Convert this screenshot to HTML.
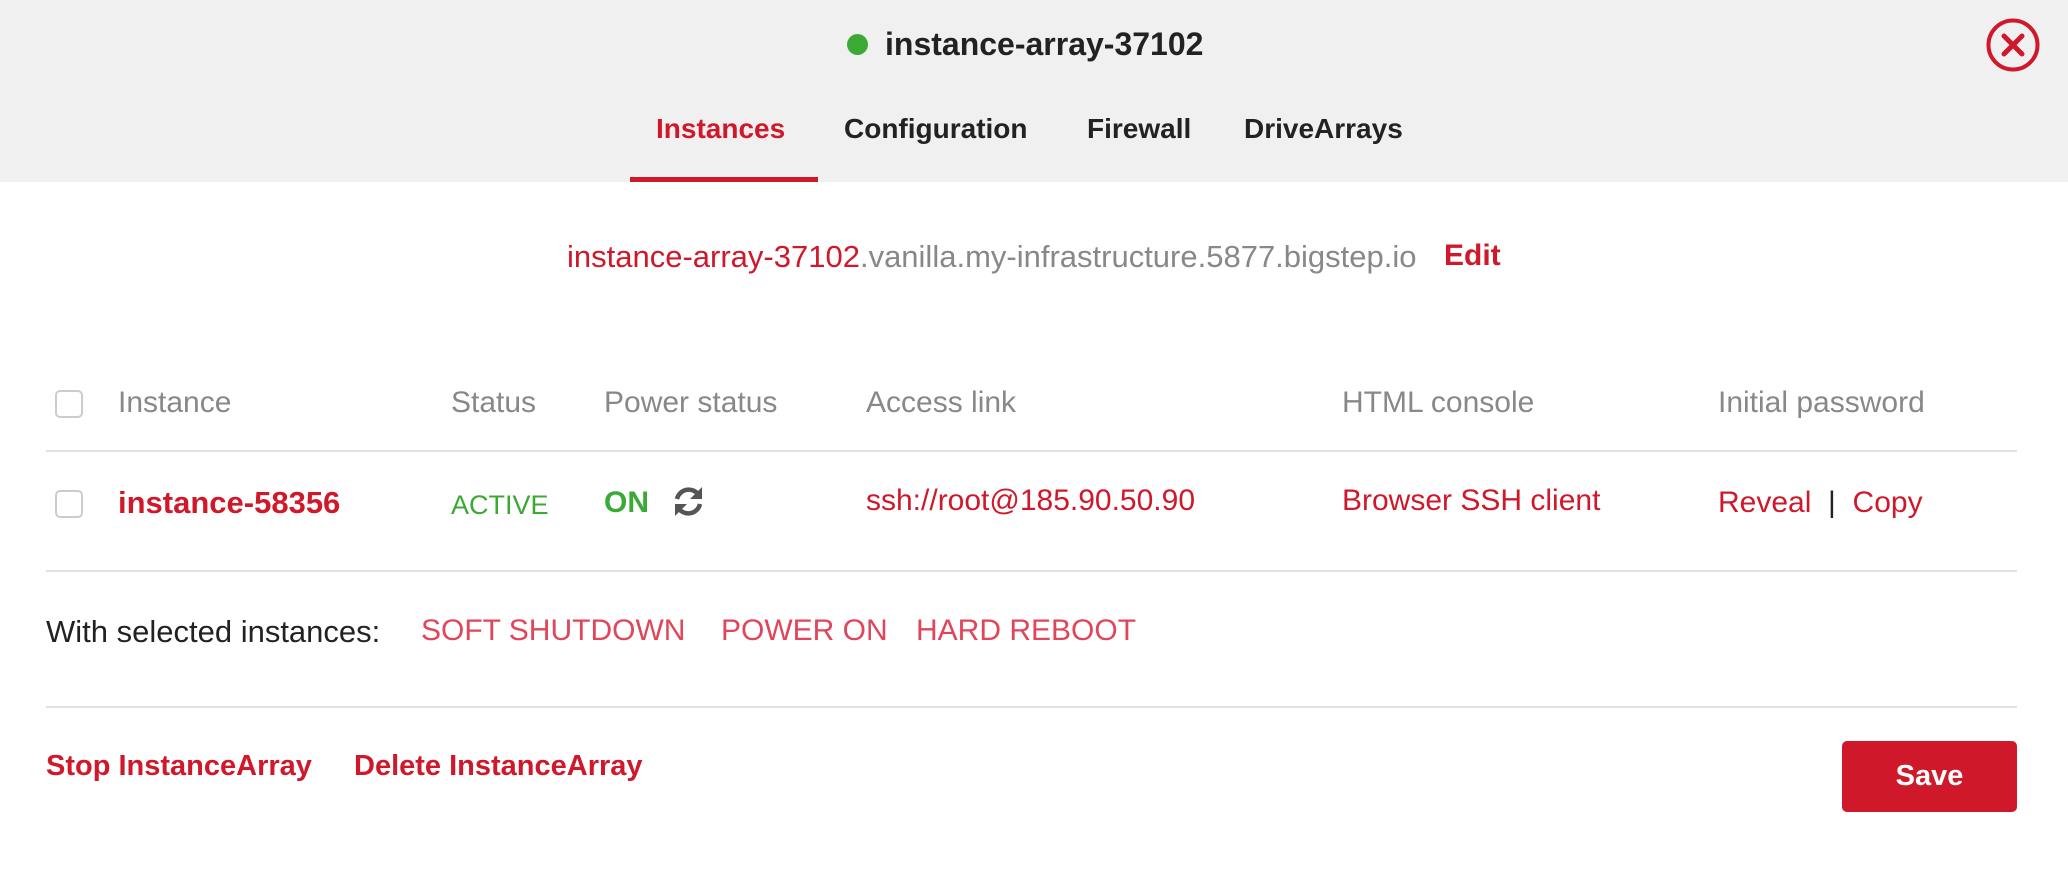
<!DOCTYPE html>
<html><head><style>
*{margin:0;padding:0;box-sizing:border-box}
body{width:2068px;height:874px;background:#fff;font-family:"Liberation Sans",Arial,sans-serif;position:relative;overflow:hidden}
.hdr{position:absolute;left:0;top:0;width:2068px;height:182px;background:#f0f0f0}
.a{position:absolute;white-space:nowrap;line-height:1}
.t{font-size:28px;color:#222;font-weight:bold}
.r{color:#d0182b}
.g{color:#888}
.cb{position:absolute;width:28px;height:28px;border:2px solid #ccc;border-radius:5px;background:#fff}
.ln{position:absolute;left:46px;width:1971px;height:2px;background:#e0e0e0}
.lr{color:#e0455a}
</style></head><body>
<div class="hdr"></div>
<div class="a" style="left:847px;top:34px;width:21px;height:21px;border-radius:50%;background:#3aaa35"></div>
<div class="a" style="left:885px;top:28px;font-size:32px;font-weight:bold;color:#222">instance-array-37102</div>
<svg class="a" style="left:1985px;top:17px" width="56" height="56" viewBox="0 0 56 56"><circle cx="28" cy="28" r="24.5" fill="none" stroke="#d0182b" stroke-width="4"/><path d="M19 19L37 37M37 19L19 37" stroke="#d0182b" stroke-width="5" stroke-linecap="round"/></svg>
<div class="a t" style="left:656px;top:115px;color:#d0182b">Instances</div>
<div class="a t" style="left:844px;top:115px">Configuration</div>
<div class="a t" style="left:1087px;top:115px">Firewall</div>
<div class="a t" style="left:1244px;top:115px">DriveArrays</div>
<div class="a" style="left:630px;top:177px;width:188px;height:5px;background:#d0182b"></div>
<div class="a" style="left:567px;top:241px;font-size:31px"><span class="r">instance-array-37102</span><span class="g">.vanilla.my-infrastructure.5877.bigstep.io</span></div>
<div class="a r" style="left:1444px;top:241px;font-size:30px;font-weight:bold">Edit</div>
<div class="cb" style="left:55px;top:390px"></div>
<div class="a g" style="left:118px;top:388px;font-size:30px">Instance</div>
<div class="a g" style="left:451px;top:388px;font-size:30px">Status</div>
<div class="a g" style="left:604px;top:388px;font-size:30px">Power status</div>
<div class="a g" style="left:866px;top:388px;font-size:30px">Access link</div>
<div class="a g" style="left:1342px;top:388px;font-size:30px">HTML console</div>
<div class="a g" style="left:1718px;top:388px;font-size:30px">Initial password</div>
<div class="ln" style="top:450px"></div>
<div class="cb" style="left:55px;top:490px"></div>
<div class="a r" style="left:118px;top:487px;font-size:31px;font-weight:bold">instance-58356</div>
<div class="a" style="left:451px;top:492px;font-size:27px;color:#3aaa35">ACTIVE</div>
<div class="a" style="left:604px;top:488px;font-size:30px;font-weight:bold;color:#3aaa35">ON</div>
<svg class="a" style="left:672px;top:485px" width="33" height="33" viewBox="0 0 33 33"><path d="M5 14A12 12 0 0 1 26 9" fill="none" stroke="#555" stroke-width="4.5"/><path d="M30 2V14H18Z" fill="#555"/><path d="M28 19A12 12 0 0 1 7 24" fill="none" stroke="#555" stroke-width="4.5"/><path d="M3 31V19H15Z" fill="#555"/></svg>
<div class="a r" style="left:866px;top:486px;font-size:30px">ssh://root@185.90.50.90</div>
<div class="a r" style="left:1342px;top:486px;font-size:30px">Browser SSH client</div>
<div class="a" style="left:1718px;top:488px;font-size:30px;color:#222"><span class="r">Reveal</span> &nbsp;| &nbsp;<span class="r">Copy</span></div>
<div class="ln" style="top:570px"></div>
<div class="a" style="left:46px;top:616px;font-size:31px;color:#222">With selected instances:</div>
<div class="a lr" style="left:421px;top:616px;font-size:30px">SOFT SHUTDOWN</div>
<div class="a lr" style="left:721px;top:616px;font-size:30px">POWER ON</div>
<div class="a lr" style="left:916px;top:616px;font-size:30px">HARD REBOOT</div>
<div class="ln" style="top:706px"></div>
<div class="a r" style="left:46px;top:752px;font-size:29px;font-weight:bold">Stop InstanceArray</div>
<div class="a r" style="left:354px;top:752px;font-size:29px;font-weight:bold">Delete InstanceArray</div>
<div class="a" style="left:1842px;top:741px;width:175px;height:71px;background:#d0182b;border-radius:5px;color:#fff;font-size:29px;font-weight:bold;text-align:center;line-height:71px">Save</div>
</body></html>
